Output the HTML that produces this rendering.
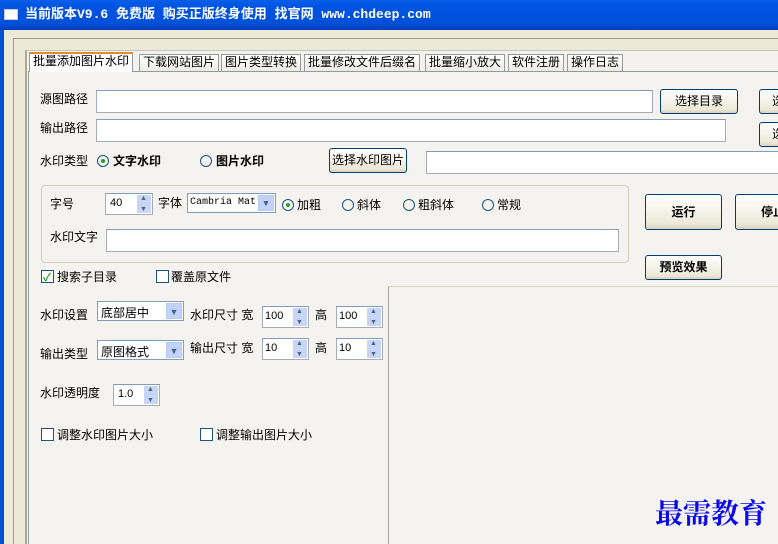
<!DOCTYPE html>
<html><head><meta charset="utf-8"><style>
*{margin:0;padding:0;box-sizing:border-box}
body{width:778px;height:544px;overflow:hidden;background:#ece9d8;font-family:"Liberation Sans","SimSun","Noto Sans CJK SC",sans-serif;font-size:12px;color:#000;position:relative}
.a{position:absolute}
.t{position:absolute;white-space:nowrap;font-size:12px;line-height:14px}
.in{position:absolute;background:#fff;border:1px solid #a5acb5;border-top-color:#7f9db9}
.btn{position:absolute;background:linear-gradient(#fff,#ece9d8 85%,#d6d0c0);border:1px solid #003c74;border-radius:3px;text-align:center;font-size:12px;line-height:22px}
.rad{position:absolute;width:12px;height:12px;border:1px solid #1c5180;border-radius:50%;background:#f4f4f0}
.rad.on::after{content:"";position:absolute;left:3px;top:3px;width:4px;height:4px;border-radius:50%;background:#21a121}
.chk{position:absolute;width:13px;height:13px;border:1px solid #1c5180;background:#fff}
.spin{position:absolute;right:1px;top:1px;bottom:1px;width:15px;background:#c7d6f5;border-left:1px solid #fff}
.spin::before{content:"▲";position:absolute;top:0;left:3px;font-size:7px;color:#4d6185}
.spin::after{content:"▼";position:absolute;bottom:0;left:3px;font-size:7px;color:#4d6185}
.dd{position:absolute;right:1px;top:1px;bottom:1px;width:16px;background:#c1d3fb;border:1px solid #b7c9f0;color:#4d6185;font-size:9px;text-align:center;line-height:16px}
.tab{position:absolute;top:54px;height:17px;border:1px solid #919b9c;border-bottom:none;background:linear-gradient(#fff,#ecebe5);font-size:12px;line-height:15px;padding:0 3px;white-space:nowrap}
</style></head><body>
<div class="a" style="left:0;top:0;width:778px;height:30px;background:linear-gradient(#0a5fe8,#0054e3 20%,#0050d8 80%,#003dba)"></div>
<div class="a" style="left:4px;top:9px;width:14px;height:11px;background:#fff;border:1px solid #ccc"></div>
<div class="t" style="left:25px;top:7px;color:#fff;font-weight:bold;font-family:'Liberation Mono','SimSun','Noto Sans CJK SC',monospace;font-size:13px;line-height:16px">当前版本V9.6 免费版 购买正版终身使用 找官网 www.chdeep.com</div>
<div class="a" style="left:0;top:30px;width:4px;height:514px;background:#0050d8"></div>
<div class="a" style="left:13px;top:38px;width:765px;height:506px;border-left:1px solid #a09c8c;border-top:1px solid #a09c8c;background:#ece9d8"></div>
<div class="a" style="left:25px;top:50px;width:753px;height:494px;border-left:2px solid #aca899;border-top:1px solid #c9c5b5;background:#f4f2ee"></div>
<div class="a" style="left:28px;top:71px;width:750px;height:473px;border:1px solid #919b9c;border-right:none;border-bottom:none;background:#f5f3ef"></div>
<div class="tab" style="left:29px;top:52px;height:20px;background:#fcfcfe;border-top:2px solid #e68b2c;z-index:2;font-size:12px">批量添加图片水印</div>
<div class="tab" style="left:139px">下载网站图片</div>
<div class="tab" style="left:221px">图片类型转换</div>
<div class="tab" style="left:304px">批量修改文件后缀名</div>
<div class="tab" style="left:425px">批量缩小放大</div>
<div class="tab" style="left:508px">软件注册</div>
<div class="tab" style="left:567px">操作日志</div>

<div class="t" style="left:40px;top:92px">源图路径</div>
<div class="in" style="left:96px;top:90px;width:557px;height:23px"></div>
<div class="btn" style="left:660px;top:89px;width:78px;height:25px">选择目录</div>
<div class="btn" style="left:759px;top:89px;width:30px;height:25px;text-align:left;padding-left:12px">选</div>
<div class="t" style="left:40px;top:121px">输出路径</div>
<div class="in" style="left:96px;top:119px;width:630px;height:23px"></div>
<div class="btn" style="left:759px;top:122px;width:30px;height:25px;text-align:left;padding-left:12px">选</div>

<div class="t" style="left:40px;top:154px">水印类型</div>
<div class="rad on" style="left:97px;top:155px"></div>
<div class="t" style="left:113px;top:154px;font-weight:bold">文字水印</div>
<div class="rad" style="left:200px;top:155px"></div>
<div class="t" style="left:216px;top:154px;font-weight:bold">图片水印</div>
<div class="btn" style="left:329px;top:148px;width:78px;height:25px">选择水印图片</div>
<div class="in" style="left:426px;top:151px;width:360px;height:23px"></div>

<div class="a" style="left:41px;top:185px;width:588px;height:78px;border:1px solid #d0d0bf;border-radius:4px"></div>
<div class="t" style="left:50px;top:197px">字号</div>
<div class="in" style="left:105px;top:193px;width:48px;height:22px;font-size:11px;padding:3px 4px">40<div class="spin"></div></div>
<div class="t" style="left:158px;top:196px">字体</div>
<div class="in" style="left:187px;top:193px;width:89px;height:20px;font-family:'Liberation Mono',monospace;font-size:10px;padding:3px 2px;border-color:#7f9db9">Cambria Mat<div class="dd">▼</div></div>
<div class="rad on" style="left:282px;top:199px"></div>
<div class="t" style="left:297px;top:198px">加粗</div>
<div class="rad" style="left:342px;top:199px"></div>
<div class="t" style="left:357px;top:198px">斜体</div>
<div class="rad" style="left:403px;top:199px"></div>
<div class="t" style="left:418px;top:198px">粗斜体</div>
<div class="rad" style="left:482px;top:199px"></div>
<div class="t" style="left:497px;top:198px">常规</div>
<div class="t" style="left:50px;top:230px">水印文字</div>
<div class="in" style="left:106px;top:229px;width:513px;height:23px"></div>

<div class="btn" style="left:645px;top:194px;width:77px;height:36px;line-height:34px;font-weight:bold">运行</div>
<div class="btn" style="left:735px;top:194px;width:60px;height:36px;line-height:34px;font-weight:bold;text-align:left;padding-left:25px">停止</div>
<div class="btn" style="left:645px;top:255px;width:77px;height:25px;font-weight:bold">预览效果</div>

<div class="chk" style="left:41px;top:270px"><span style="position:absolute;left:1px;top:-2px;color:#21a121;font-size:11px;font-weight:bold">✓</span></div>
<div class="t" style="left:57px;top:270px">搜索子目录</div>
<div class="chk" style="left:156px;top:270px"></div>
<div class="t" style="left:171px;top:270px">覆盖原文件</div>

<div class="a" style="left:388px;top:286px;width:390px;height:258px;border-left:1px solid #aca899;border-top:1px solid #d8d4c8;background:#f5f3ef"></div>

<div class="t" style="left:40px;top:308px">水印设置</div>
<div class="in" style="left:97px;top:301px;width:87px;height:20px;padding:2px 3px;border-color:#7f9db9">底部居中<div class="dd">▼</div></div>
<div class="t" style="left:190px;top:308px">水印尺寸 宽</div>
<div class="in" style="left:262px;top:306px;width:47px;height:22px;font-size:11px;padding:3px 2px">100<div class="spin"></div></div>
<div class="t" style="left:315px;top:308px">高</div>
<div class="in" style="left:336px;top:306px;width:47px;height:22px;font-size:11px;padding:3px 2px">100<div class="spin"></div></div>

<div class="t" style="left:40px;top:347px">输出类型</div>
<div class="in" style="left:97px;top:340px;width:87px;height:20px;padding:2px 3px;border-color:#7f9db9">原图格式<div class="dd">▼</div></div>
<div class="t" style="left:190px;top:341px">输出尺寸 宽</div>
<div class="in" style="left:262px;top:338px;width:47px;height:22px;font-size:11px;padding:3px 2px">10<div class="spin"></div></div>
<div class="t" style="left:315px;top:341px">高</div>
<div class="in" style="left:336px;top:338px;width:47px;height:22px;font-size:11px;padding:3px 2px">10<div class="spin"></div></div>

<div class="t" style="left:40px;top:386px">水印透明度</div>
<div class="in" style="left:113px;top:384px;width:47px;height:22px;font-size:11px;padding:3px 4px">1.0<div class="spin"></div></div>

<div class="chk" style="left:41px;top:428px"></div>
<div class="t" style="left:57px;top:428px">调整水印图片大小</div>
<div class="chk" style="left:200px;top:428px"></div>
<div class="t" style="left:216px;top:428px">调整输出图片大小</div>

<div class="t" style="left:655px;top:496px;font-size:28px;line-height:32px;color:#0a0ae8;font-weight:bold;font-family:'Noto Serif CJK SC',serif">最需教育</div>
</body></html>
